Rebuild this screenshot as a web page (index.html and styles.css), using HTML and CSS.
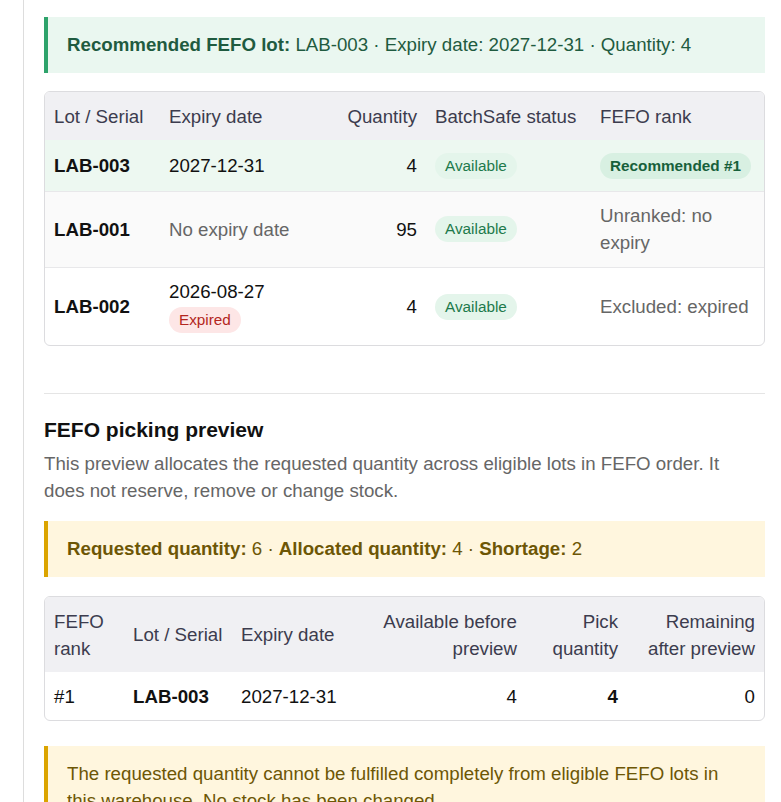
FILE: index.html
```html
<!DOCTYPE html>
<html lang="en">
<head>
  <meta charset="UTF-8" />
  <meta name="viewport" content="width=device-width, initial-scale=1.0" />
  <title>FEFO lot selection</title>
  <link rel="stylesheet" href="styles.css">
</head>
<body>

  <div class="panel">

    <!-- Recommended lot summary -->
    <div class="notice notice-success">
      <strong>Recommended FEFO lot:</strong> LAB-003 · Expiry date: 2027-12-31 · Quantity: 4
    </div>

    <div class="table-wrap">
      <table class="lots">
        <colgroup>
          <col style="width: 115px">
          <col style="width: 168px">
          <col style="width: 98px">
          <col style="width: 165px">
          <col>
        </colgroup>
        <thead>
          <tr>
            <th>Lot / Serial</th>
            <th>Expiry date</th>
            <th class="num">Quantity</th>
            <th>BatchSafe status</th>
            <th>FEFO rank</th>
          </tr>
        </thead>
        <tbody>
          <tr class="row-recommended">
            <td><strong>LAB-003</strong></td>
            <td>2027-12-31</td>
            <td class="num">4</td>
            <td><span class="badge badge-ok">Available</span></td>
            <td><span class="badge badge-rank">Recommended #1</span></td>
          </tr>
          <tr class="row-muted">
            <td><strong>LAB-001</strong></td>
            <td class="muted">No expiry date</td>
            <td class="num">95</td>
            <td><span class="badge badge-ok">Available</span></td>
            <td class="muted">Unranked: no expiry</td>
          </tr>
          <tr>
            <td><strong>LAB-002</strong></td>
            <td>
              2026-08-27<br>
              <span class="badge badge-expired">Expired</span>
            </td>
            <td class="num">4</td>
            <td><span class="badge badge-ok">Available</span></td>
            <td class="muted">Excluded: expired</td>
          </tr>
        </tbody>
      </table>
    </div>

    <hr class="divider">

    <!-- Picking preview -->
    <section class="preview">
      <h3>FEFO picking preview</h3>
      <p class="muted">This preview allocates the requested quantity across eligible lots in FEFO order. It does not reserve, remove or change stock.</p>

      <div class="notice notice-warning">
        <strong>Requested quantity:</strong> 6 · <strong>Allocated quantity:</strong> 4 · <strong>Shortage:</strong> 2
      </div>

      <div class="table-wrap">
        <table class="picks">
          <colgroup>
            <col style="width: 79px">
            <col style="width: 108px">
            <col style="width: 138px">
            <col style="width: 156px">
            <col style="width: 101px">
            <col>
          </colgroup>
          <thead>
            <tr>
              <th>FEFO rank</th>
              <th>Lot / Serial</th>
              <th>Expiry date</th>
              <th class="num">Available before preview</th>
              <th class="num">Pick quantity</th>
              <th class="num">Remaining after preview</th>
            </tr>
          </thead>
          <tbody>
            <tr>
              <td>#1</td>
              <td><strong>LAB-003</strong></td>
              <td>2027-12-31</td>
              <td class="num">4</td>
              <td class="num"><strong>4</strong></td>
              <td class="num">0</td>
            </tr>
          </tbody>
        </table>
      </div>

      <div class="notice notice-warning notice-plain">
        The requested quantity cannot be fulfilled completely from eligible FEFO lots in this warehouse. No stock has been changed.
      </div>
    </section>

  </div>

</body>
</html>
```

FILE: styles.css
```css
body {
  margin: 0;
  font-family: "Liberation Sans", Arial, sans-serif;
  font-size: 18.7px;
  line-height: 27px;
  color: #111;
  background: #fff;
}

.panel {
  margin-left: 23px;
  border-left: 1px solid #dddddd;
  padding: 17px 16px 0 20px;
  min-height: 100vh;
}

/* Notices */
.notice {
  border-left: 4px solid;
  padding: 14px 18px 15px 19px;
  margin-bottom: 18px;
}

.notice-success {
  background-color: #eaf7f0;
  border-color: #2ea36b;
  color: #1f5b40;
}

.notice-warning {
  background-color: #fff6de;
  border-color: #dba400;
  color: #6d5605;
}

.notice-plain {
  margin-top: 25px;
}

/* Tables */
.table-wrap {
  border: 1px solid #dcdcdf;
  border-radius: 6px;
  overflow: hidden;
}

table {
  width: 100%;
  border-collapse: collapse;
  table-layout: fixed;
}

th,
td {
  padding: 10.5px 9px;
  text-align: left;
  vertical-align: middle;
}

th {
  background-color: #f0f0f3;
  color: #3c3c4e;
  font-weight: normal;
}

td {
  border-top: 1px solid #e8e8ea;
}

thead + tbody tr:first-child td {
  border-top: none;
}

.num {
  text-align: right;
}

.row-recommended td {
  background-color: #edf8f1;
}

.row-muted td {
  background-color: #fafafa;
}

.muted {
  color: #666;
}

/* Badges */
.badge {
  display: inline-block;
  font-size: 15.3px;
  line-height: 20px;
  padding: 3px 10px;
  margin: 1.5px 0;
  border-radius: 999px;
  white-space: nowrap;
}

.badge-ok {
  background-color: #e4f5eb;
  color: #1e7a4b;
}

.badge-rank {
  background-color: #d8f0e2;
  color: #17603b;
  font-weight: bold;
}

.badge-expired {
  background-color: #fde6e6;
  color: #b3261e;
}

/* Preview section */
.divider {
  border: none;
  border-top: 1px solid #e5e5e5;
  margin: 47px 0 20px;
}

.preview h3 {
  font-size: 21px;
  line-height: 31px;
  margin: 0 0 5px;
}

.preview p {
  max-width: 700px;
  margin: 0 0 17px;
}

.preview .table-wrap {
  margin-top: 19px;
}

.picks td {
  border-top: none;
}
```
